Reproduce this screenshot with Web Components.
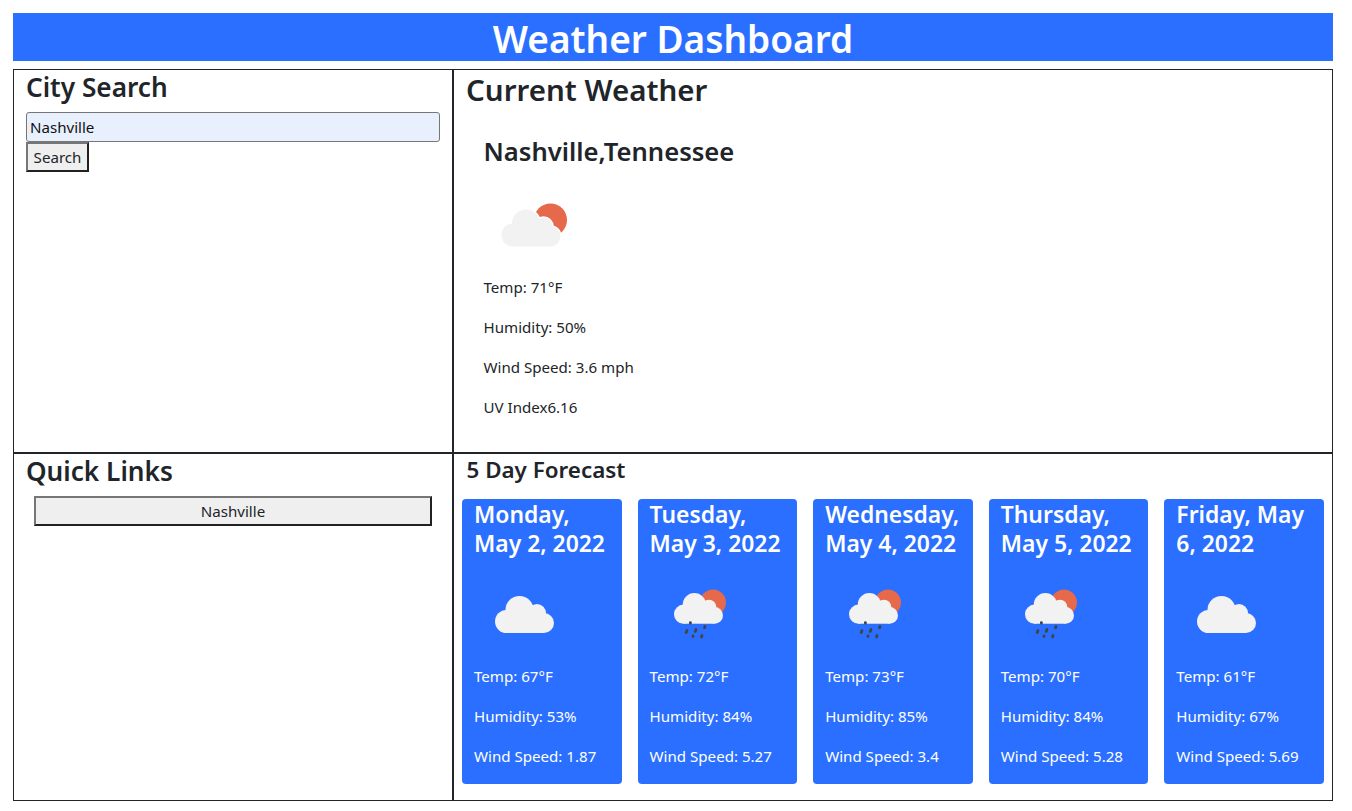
<!DOCTYPE html>
<html lang="en">
<head>
<meta charset="utf-8">
<title>Weather Dashboard</title>
<style>
  html, body { margin: 0; background: #fff; }
  body { font-family: "Noto Sans", "Open Sans", sans-serif; font-size: 16px; line-height: 1.5; color: #212529; }
</style>
</head>
<body>
<weather-app>
  <span slot="title">Weather Dashboard</span>
  <city-search slot="search" value="Nashville"></city-search>
  <current-weather slot="current" city="Nashville,Tennessee" temp="71" humidity="50" wind="3.6" uv="6.16"></current-weather>
  <quick-links slot="links" cities="Nashville"></quick-links>
  <forecast-list slot="forecast">
    <forecast-card date="Monday, May 2, 2022" icon="cloud" temp="67" humidity="53" wind="1.87"></forecast-card>
    <forecast-card date="Tuesday, May 3, 2022" icon="rain" temp="72" humidity="84" wind="5.27"></forecast-card>
    <forecast-card date="Wednesday, May 4, 2022" icon="rain" temp="73" humidity="85" wind="3.4"></forecast-card>
    <forecast-card date="Thursday, May 5, 2022" icon="rain" temp="70" humidity="84" wind="5.28"></forecast-card>
    <forecast-card date="Friday, May 6, 2022" icon="cloud" temp="61" humidity="67" wind="5.69"></forecast-card>
  </forecast-list>
</weather-app>

<script>
// Heading styles shared by the panels
const headings = `
  h2, h3, h4 { margin: 0 0 8px; font-weight: 600; }
  h2 { font-size: 29.5px; line-height: 38px; }
  h3 { font-size: 25.6px; line-height: 33px; }
  h4 { font-size: 22.4px; line-height: 29px; }
  p { margin: 0 0 16px; font-size: 15.1px; line-height: 24px; }
`;

class WeatherApp extends HTMLElement {
  constructor() {
    super();
    this.attachShadow({ mode: 'open' });
    this.shadowRoot.innerHTML = `
      <style>
        :host { display: block; padding: 13px 19px 10px 13px; }
        header {
          height: 48px; margin-bottom: 8px; background: #2a6fff; color: #fff;
          text-align: center; font-size: 37px; font-weight: 600; line-height: 52px;
        }
        .grid {
          display: grid; grid-template-columns: 440px 1fr; grid-template-rows: 384px 346px;
          border: 1px solid #212529; height: 730px;
        }
        .cell { min-width: 0; }
        .left { border-right: 2px solid #212529; }
        .top { border-bottom: 2px solid #212529; }
      </style>
      <header><slot name="title"></slot></header>
      <div class="grid">
        <div class="cell left top"><slot name="search"></slot></div>
        <div class="cell top"><slot name="current"></slot></div>
        <div class="cell left"><slot name="links"></slot></div>
        <div class="cell"><slot name="forecast"></slot></div>
      </div>
    `;
  }
}

class CitySearch extends HTMLElement {
  constructor() {
    super();
    this.attachShadow({ mode: 'open' });
  }
  connectedCallback() {
    this.shadowRoot.innerHTML = `
      <style>
        ${headings}
        :host { display: block; padding: 1px 12px 0; }
        h3 { font-size: 26.2px; }
        input {
          display: block; box-sizing: border-box; width: 414px; height: 30px; margin: 0; padding: 1px 3px;
          border: 1px solid #767676; border-radius: 3px; background: #e8f0fe; color: #111;
          font: 15.1px/24px "Noto Sans", sans-serif;
        }
        button {
          display: block; box-sizing: border-box; height: 30px; width: 63px; margin: 0; padding: 0;
          border: 2px solid; border-color: #767676 #212121 #212121 #767676; background: #efefef; color: #212529;
          font: 15.1px/24px "Noto Sans", sans-serif;
        }
      </style>
      <h3>City Search</h3>
      <input type="text" value="${this.getAttribute('value') || ''}">
      <button type="button">Search</button>
    `;
  }
}

class QuickLinks extends HTMLElement {
  constructor() {
    super();
    this.attachShadow({ mode: 'open' });
  }
  connectedCallback() {
    const cities = (this.getAttribute('cities') || '').split(',');
    this.shadowRoot.innerHTML = `
      <style>
        ${headings}
        :host { display: block; padding: 1px 20px 0 12px; }
        h3 { font-size: 26.2px; }
        div { padding: 0 0 0 8px; }
        button {
          display: block; box-sizing: border-box; width: 398px; height: 30px; margin: 0; padding: 0;
          border: 2px solid; border-color: #767676 #212121 #212121 #767676; background: #efefef; color: #212529;
          font: 15.1px/24px "Noto Sans", sans-serif;
        }
      </style>
      <h3>Quick Links</h3>
      <div>${cities.map(c => `<button type="button">${c}</button>`).join('')}</div>
    `;
  }
}

class WeatherIcon extends HTMLElement {
  constructor() {
    super();
    this.attachShadow({ mode: 'open' });
  }
  connectedCallback() {
    const kind = this.getAttribute('kind') || 'cloud';
    const cloud = `
      <circle cx="11.5" cy="25.5" r="11.5"/>
      <circle cx="24.5" cy="14" r="14"/>
      <circle cx="42" cy="17" r="9"/>
      <circle cx="49" cy="27" r="10"/>
      <rect x="11" y="17" width="38" height="20"/>`;
    let art = '';
    if (kind === 'cloud') {
      art = `<g fill="#f2f2f2" transform="translate(21 30)">${cloud}</g>`;
    } else if (kind === 'sun') {
      art = `<circle cx="66.5" cy="44" r="16.5" fill="#e5694a"/>
        <g fill="#fff" stroke="#fff" stroke-width="2.5" transform="translate(17.5 33.5)">${cloud}</g>
        <g fill="#f2f2f2" transform="translate(17.5 33.5)">${cloud}</g>`;
    } else {
      // cloud with the sun behind it and a few drops underneath
      art = `<circle cx="63" cy="36.5" r="13" fill="#e5694a"/>
        <g fill="#f2f2f2" transform="translate(24 27) scale(.83)">${cloud}</g>
        <g stroke="#444" stroke-width="2.8" stroke-linecap="round">
          <path d="M40.4 56.6v.6M37 64.5l-.8 2M46 63.5l-.8 2M55 60.5l-.5 1.2M43 70v.5M52 69.5l-.5 1.5"/>
        </g>`;
    }
    this.shadowRoot.innerHTML = `
      <style>
        :host { display: block; width: 100px; height: 100px; }
        svg { display: block; }
      </style>
      <svg width="100" height="100" viewBox="0 0 100 100">${art}</svg>
    `;
  }
}

class CurrentWeather extends HTMLElement {
  constructor() {
    super();
    this.attachShadow({ mode: 'open' });
  }
  connectedCallback() {
    const a = n => this.getAttribute(n);
    this.shadowRoot.innerHTML = `
      <style>
        ${headings}
        :host { display: block; padding: 1px 12px 0; }
        .today { padding: 18px 0 0 17.5px; }
        weather-icon { height: 99px; }
      </style>
      <h2>Current Weather</h2>
      <div class="today">
        <h3>${a('city')}</h3>
        <weather-icon kind="sun"></weather-icon>
        <p>Temp: ${a('temp')}°F</p>
        <p>Humidity: ${a('humidity')}%</p>
        <p>Wind Speed: ${a('wind')} mph</p>
        <p>UV Index${a('uv')}</p>
      </div>
    `;
  }
}

class ForecastList extends HTMLElement {
  constructor() {
    super();
    this.attachShadow({ mode: 'open' });
    this.shadowRoot.innerHTML = `
      <style>
        ${headings}
        :host { display: block; padding: 1px 8px 0 8px; }
        h4 { padding-left: 4.5px; margin-bottom: 14px; line-height: 30px; }
        .row { display: flex; justify-content: space-between; }
      </style>
      <h4>5 Day Forecast</h4>
      <div class="row"><slot></slot></div>
    `;
  }
}

class ForecastCard extends HTMLElement {
  constructor() {
    super();
    this.attachShadow({ mode: 'open' });
  }
  connectedCallback() {
    const a = n => this.getAttribute(n);
    this.shadowRoot.innerHTML = `
      <style>
        ${headings}
        :host {
          display: block; box-sizing: border-box; width: 159.7px; height: 285px; padding: 1px 12px 0;
          background: #2a6fff; color: #fff; border-radius: 4px;
        }
        h4 { font-size: 22.9px; }
        weather-icon { height: 98px; }
      </style>
      <h4>${a('date')}</h4>
      <weather-icon kind="${a('icon')}"></weather-icon>
      <p>Temp: ${a('temp')}°F</p>
      <p>Humidity: ${a('humidity')}%</p>
      <p>Wind Speed: ${a('wind')}</p>
    `;
  }
}

customElements.define('weather-app', WeatherApp);
customElements.define('weather-icon', WeatherIcon);
customElements.define('city-search', CitySearch);
customElements.define('quick-links', QuickLinks);
customElements.define('current-weather', CurrentWeather);
customElements.define('forecast-list', ForecastList);
customElements.define('forecast-card', ForecastCard);
</script>
</body>
</html>
